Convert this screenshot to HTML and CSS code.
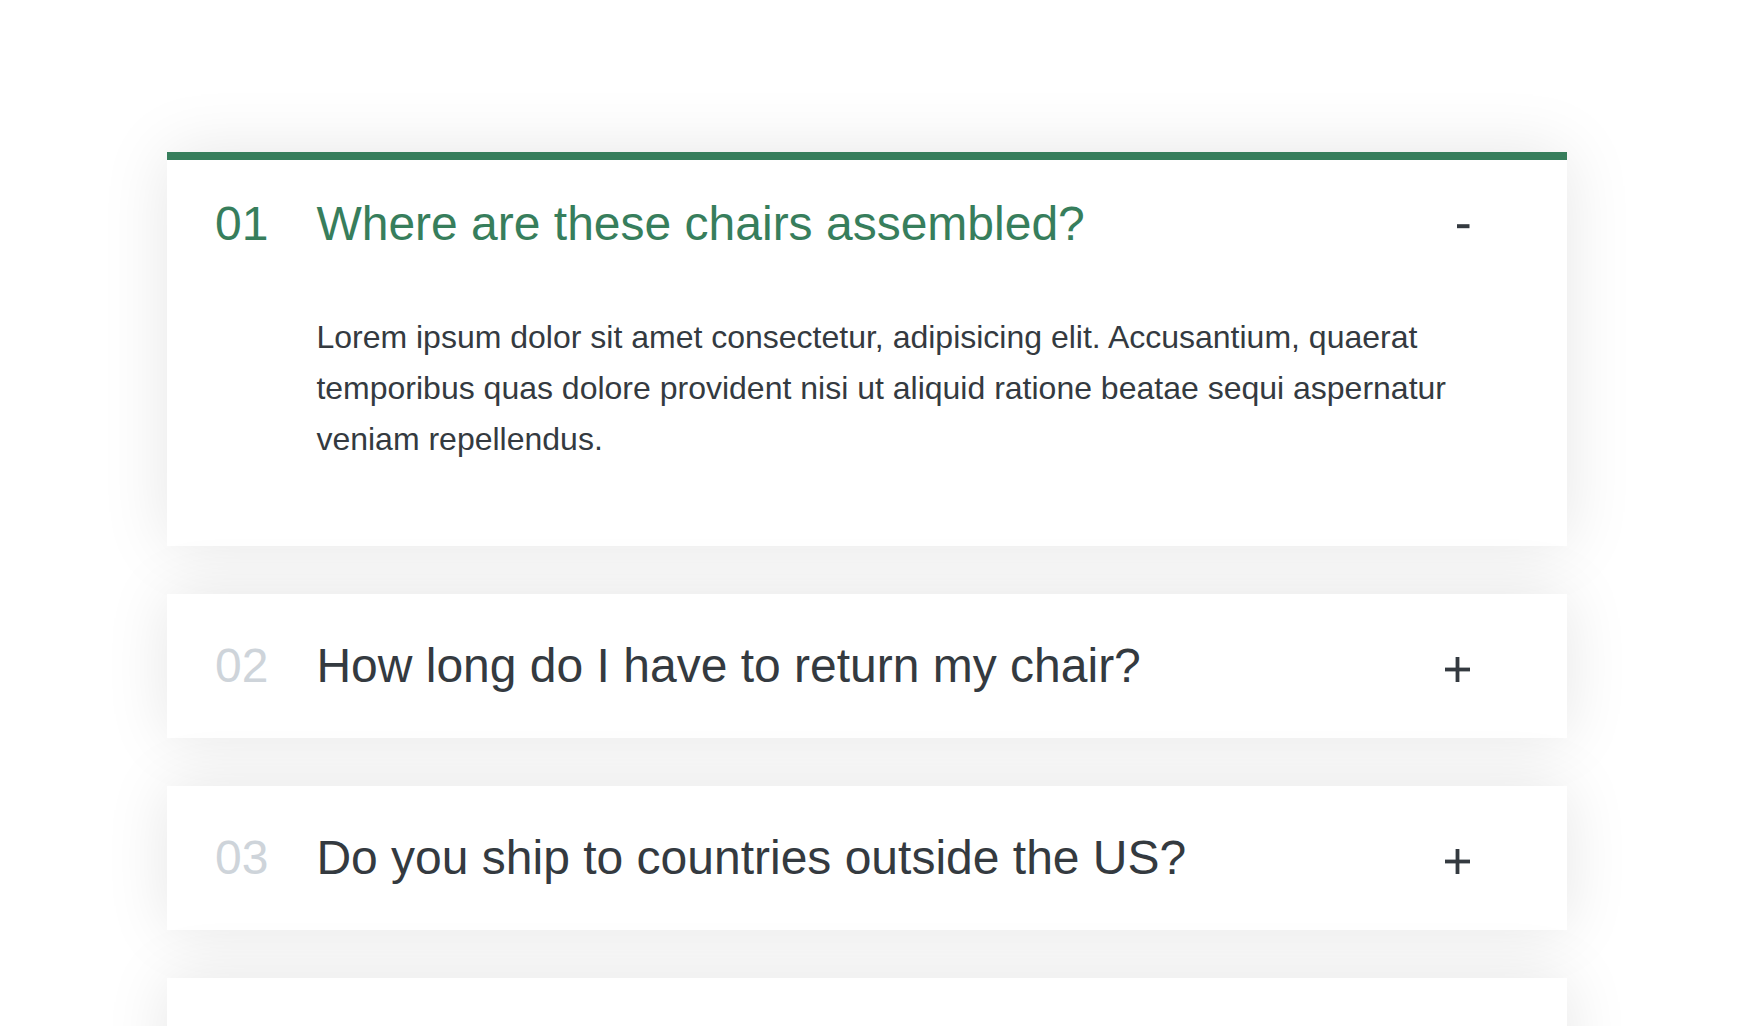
FILE: index.html
```html
<!DOCTYPE html>
<html lang="en">
<head>
<meta charset="utf-8">
<title>FAQ Accordion</title>
<link rel="stylesheet" href="styles.css">
</head>
<body>
<div class="accordion">
  <div class="item open">
    <p class="number">01</p>
    <p class="text">Where are these chairs assembled?</p>
    <svg class="icon" viewBox="0 0 25 48" width="25" height="48" aria-hidden="true"><rect x="12" y="24.2" width="12.5" height="4" /></svg>
    <div class="hidden-box">
      <p>Lorem ipsum dolor sit amet consectetur, adipisicing elit. Accusantium, quaerat temporibus quas dolore provident nisi ut aliquid ratione beatae sequi aspernatur veniam repellendus.</p>
    </div>
  </div>
  <div class="item">
    <p class="number">02</p>
    <p class="text">How long do I have to return my chair?</p>
    <svg class="icon" viewBox="0 0 25 48" width="25" height="48" aria-hidden="true"><rect x="10.6" y="15" width="3.8" height="25" /><rect x="0" y="25.6" width="25" height="3.8" /></svg>
  </div>
  <div class="item">
    <p class="number">03</p>
    <p class="text">Do you ship to countries outside the US?</p>
    <svg class="icon" viewBox="0 0 25 48" width="25" height="48" aria-hidden="true"><rect x="10.6" y="15" width="3.8" height="25" /><rect x="0" y="25.6" width="25" height="3.8" /></svg>
  </div>
  <div class="item">
    <p class="number">04</p>
    <p class="text">Do the chairs come with a warranty?</p>
    <svg class="icon" viewBox="0 0 25 48" width="25" height="48" aria-hidden="true"><rect x="10.6" y="15" width="3.8" height="25" /><rect x="0" y="25.6" width="25" height="3.8" /></svg>
  </div>
</div>
</body>
</html>
```

FILE: styles.css
```css
* {
  margin: 0;
  padding: 0;
  box-sizing: border-box;
}

body {
  font-family: "Liberation Sans", Arial, Helvetica, sans-serif;
  color: #343a40;
  background: #ffffff;
  overflow: hidden;
}

.accordion {
  width: 1400px;
  margin: 152px 0 0 167px;
  display: flex;
  flex-direction: column;
  gap: 48px;
}

.item {
  background: #ffffff;
  box-shadow: 0 0 64px rgba(0, 0, 0, 0.1);
  padding: 48px 97px 48px 48px;
  display: grid;
  grid-template-columns: auto 1fr 25px;
  column-gap: 48px;
  row-gap: 64px;
  align-items: center;
}

.number,
.text {
  font-size: 48px;
  line-height: 48px;
  font-weight: 400;
}

.number {
  color: #ced4da;
}

.icon {
  display: block;
  fill: #343a40;
}

.hidden-box {
  grid-column: 2 / -1;
  margin-bottom: 32px;
}

.hidden-box p {
  font-size: 32px;
  line-height: 1.6;
}

.open {
  border-top: 8px solid #377e5c;
  padding-top: 40px;
}

.open .number,
.open .text {
  color: #377e5c;
}
```
